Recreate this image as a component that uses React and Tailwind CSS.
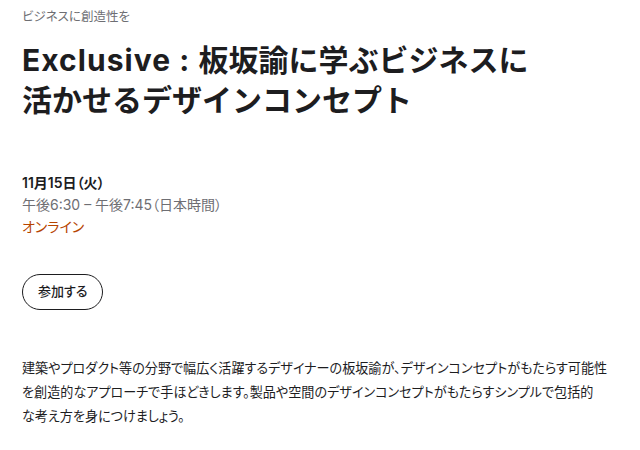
export default function App() {
  return (
    <div
      className="min-h-screen bg-white px-[22px] pt-[8px] text-[#1d1d1f] [font-feature-settings:'palt']"
      style={{ fontFamily: '"Inter", "Noto Sans CJK JP", sans-serif' }}
    >
      <p className="text-[12.5px] leading-[18px] text-[#6e6e73]">ビジネスに創造性を</p>

      <h1 className="mt-[14px] text-[30px] font-bold leading-[40px] [font-feature-settings:normal]">
        <span className="tracking-[0.035em]">Exclusive : </span>板坂諭に学ぶビジネスに
        <br />
        活かせるデザインコンセプト
      </h1>

      <div className="mt-[52px] text-[14px] leading-[22px]">
        <p className="font-semibold">11月15日（火）</p>
        <p className="text-[#6e6e73]">午後6:30 – 午後7:45（日本時間）</p>
        <p className="text-[#b64400]">オンライン</p>
      </div>

      <button className="mt-[36px] h-[36px] rounded-full border border-[#1d1d1f] px-[15px] text-[13px] font-medium">
        参加する
      </button>

      <p className="mt-[46px] text-[13.1px] leading-[24px]">
        建築やプロダクト等の分野で幅広く活躍するデザイナーの板坂諭が、デザインコンセプトがもたらす可能性
        <br />
        を創造的なアプローチで手ほどきします。製品や空間のデザインコンセプトがもたらすシンプルで包括的
        <br />
        な考え方を身につけましょう。
      </p>
    </div>
  );
}
